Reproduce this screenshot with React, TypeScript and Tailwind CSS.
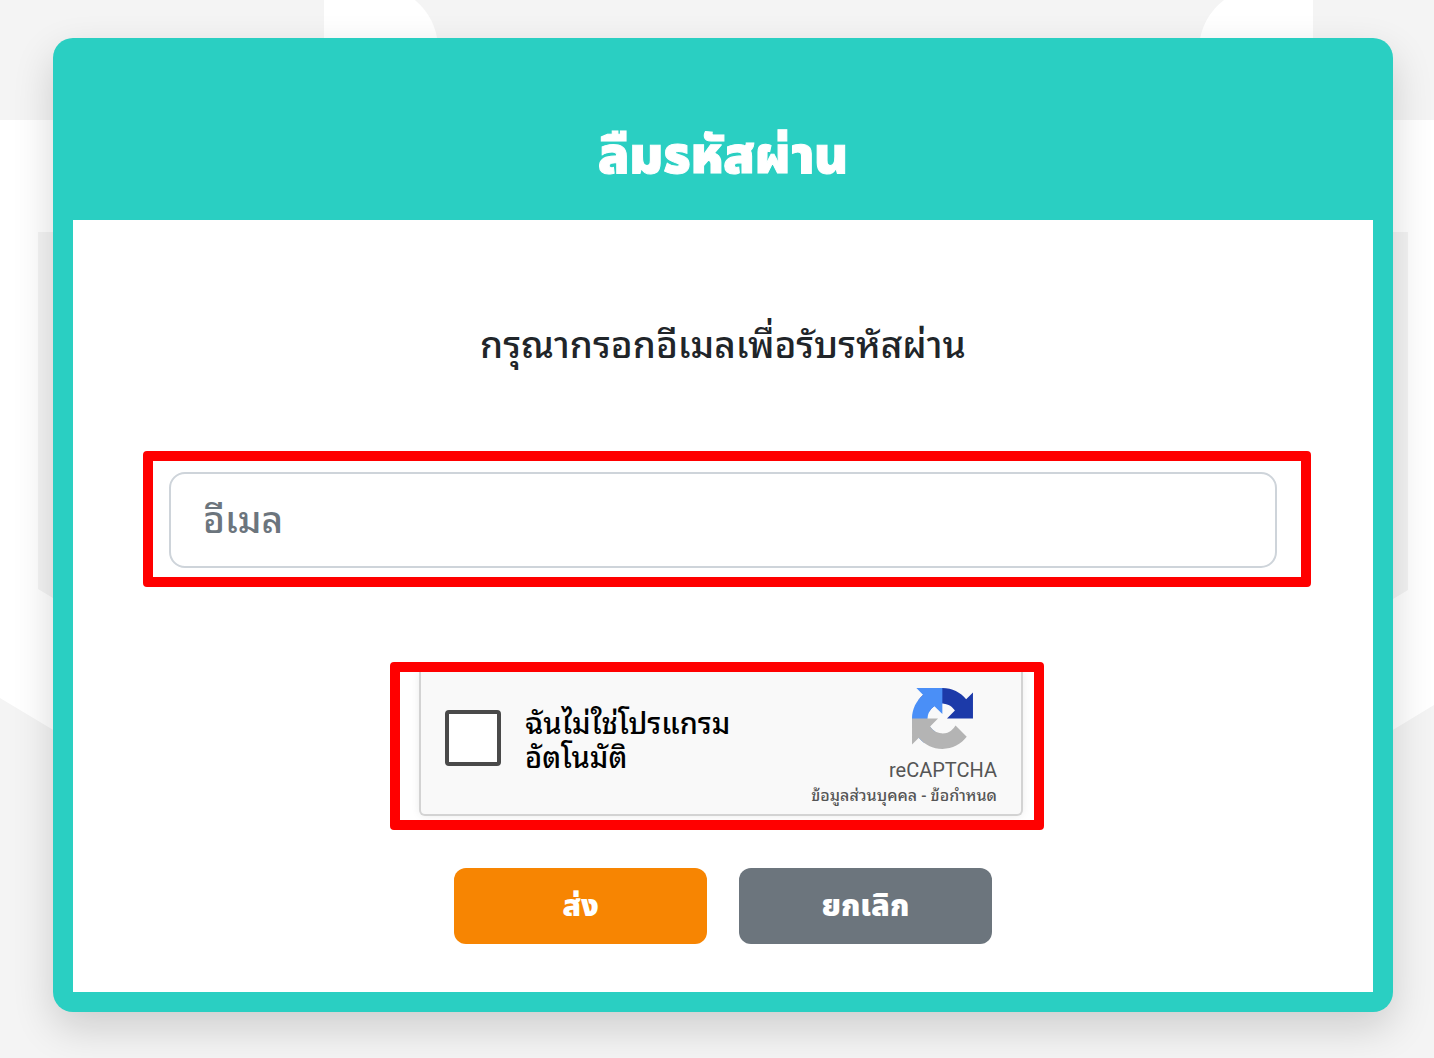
import type { ReactNode } from 'react'

function Backdrop() {
  return (
    <svg
      aria-hidden="true"
      viewBox="0 0 1434 1058"
      preserveAspectRatio="xMidYMin slice"
      className="absolute inset-0 h-full w-full"
    >
      <path d="M0 120H1434V705L1050 938H400L0 698Z" fill="#fff" />
      <path d="M38 232H1408V590L1050 805H400L38 589Z" fill="#f4f4f4" />
      <path d="M324 0H415A66 66 0 0 1 438 46V120H324Z" fill="#fff" />
      <path d="M1313 0H1224A66 66 0 0 0 1199 46V120H1313Z" fill="#fff" />
    </svg>
  )
}

function RecaptchaLogo() {
  return (
    <svg aria-hidden="true" viewBox="0 0 64 64" className="h-[61px] w-[61px]">
      <path
        fill="#1c3aa9"
        d="M64 31.955l-.033-1.37V4.687l-7.16 7.16C50.948 4.674 42.033.093 32.05.093c-10.4 0-19.622 4.96-25.458 12.64l11.736 11.86a15.55 15.55 0 0 1 4.754-5.334c2.05-1.6 4.952-2.906 8.968-2.906.485 0 .86.057 1.135.163 4.976.393 9.288 3.14 11.828 7.124l-8.307 8.307L64 31.953"
      />
      <path
        fill="#4a8ff7"
        d="M31.862.094l-1.37.033H4.594l7.16 7.16C4.58 13.147 0 22.06 0 32.046c0 10.4 4.96 19.622 12.64 25.458L24.5 45.768a15.55 15.55 0 0 1-5.334-4.754c-1.6-2.05-2.906-4.952-2.906-8.968 0-.485.057-.86.163-1.135.393-4.976 3.14-9.288 7.124-11.828l8.307 8.307L31.86.095"
      />
      <path
        fill="#b4b4b4"
        d="M.001 32.045l.033 1.37v25.898l7.16-7.16c5.86 7.173 14.774 11.754 24.76 11.754 10.4 0 19.622-4.96 25.458-12.64l-11.736-11.86a15.55 15.55 0 0 1-4.754 5.334c-2.05 1.6-4.952 2.906-8.968 2.906-.485 0-.86-.057-1.135-.163-4.976-.393-9.288-3.14-11.828-7.124l8.307-8.307c-10.522.04-22.4.066-27.295-.005"
      />
    </svg>
  )
}

function Highlight({ className, children }: { className: string; children: ReactNode }) {
  return <div className={`rounded-[4px] border-[10px] border-[#ff0000] ${className}`}>{children}</div>
}

function Recaptcha() {
  return (
    <div className="flex h-36 justify-between rounded-b-md border-2 border-t-0 border-[#d3d3d3] bg-[#f9f9f9] px-6 shadow-[0_0_8px_rgba(0,0,0,0.08)]">
      <label className="flex items-center gap-6 pb-[10px] text-[29px] leading-[34px] font-medium text-black">
        <input
          type="checkbox"
          className="h-14 w-14 shrink-0 appearance-none rounded-[4px] border-4 border-[#4a4a4a] bg-white"
        />
        <span>
          ฉันไม่ใช่โปรแกรม
          <br />
          อัตโนมัติ
        </span>
      </label>
      <div className="flex flex-col items-end pt-4 text-[#555]">
        <div className="pr-6">
          <RecaptchaLogo />
        </div>
        <p className="mt-[9px] font-['Roboto',sans-serif] text-xl leading-6">reCAPTCHA</p>
        <p className="text-base leading-6 font-medium whitespace-nowrap">
          <a href="#privacy">ข้อมูลส่วนบุคคล</a> - <a href="#terms">ข้อกำหนด</a>
        </p>
      </div>
    </div>
  )
}

export default function App() {
  return (
    <div className="relative min-h-screen overflow-hidden bg-[#f4f4f4] pt-[38px] pr-[41px] pb-[46px] pl-[53px] font-['Noto_Sans_Thai','Noto_Sans',sans-serif] text-[#212529]">
      <Backdrop />
      <main className="relative rounded-[20px] bg-[#2acfc2] px-5 pb-5 shadow-[0_16px_40px_rgba(0,0,0,0.16)]">
        <h1 className="pt-[84px] pb-[26px] text-center text-[51px] leading-[72px] font-black text-white [-webkit-text-stroke:1px_white]">
          ลืมรหัสผ่าน
        </h1>
        <form
          className="flex flex-col bg-white pt-24 pb-12 font-['Noto_Sans_Thai_Looped','Noto_Sans_Thai',sans-serif]"
          onSubmit={(e) => e.preventDefault()}
        >
          <p className="pb-2 text-center text-[37px] leading-[52px] font-medium">
            กรุณากรอกอีเมลเพื่อรับรหัสผ่าน
          </p>
          <Highlight className="mt-[75px] mr-[62px] ml-[70px] pt-[11px] pr-6 pb-[9px] pl-4">
            <input
              type="email"
              aria-label="อีเมล"
              placeholder="อีเมล"
              className="block h-24 w-full rounded-2xl border-2 border-[#ced4da] bg-white px-8 pb-2 text-[37px] font-medium placeholder:text-[#6c757d]"
            />
          </Highlight>
          <Highlight className="mt-[75px] mr-3 w-full max-w-[654px] self-center overflow-hidden pr-[11px] pb-1 pl-[19px]">
            <Recaptcha />
          </Highlight>
          <div className="mt-[38px] flex justify-center gap-8 font-['Noto_Sans_Thai',sans-serif] text-[30px] leading-[48px] font-black text-white">
            <button type="submit" className="h-[76px] w-[253px] rounded-xl bg-[#f78502] pt-[2px]">
              ส่ง
            </button>
            <button type="button" className="h-[76px] w-[253px] rounded-xl bg-[#6c757d] pt-[2px]">
              ยกเลิก
            </button>
          </div>
        </form>
      </main>
    </div>
  )
}
